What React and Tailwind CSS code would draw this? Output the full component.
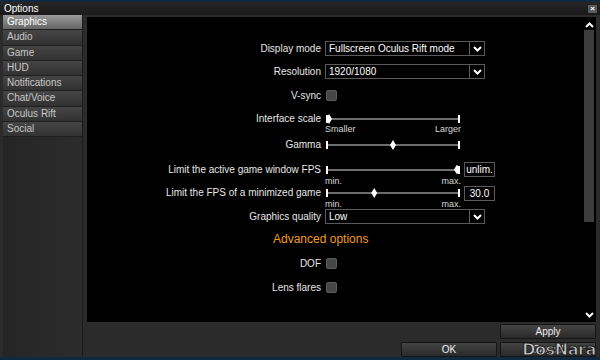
const font = { fontFamily: '"Liberation Sans Narrow", "Liberation Sans", Arial, sans-serif' };

const tabs = ["Graphics", "Audio", "Game", "HUD", "Notifications", "Chat/Voice", "Oculus Rift", "Social"];

const Chevron = ({ up }) => (
  <svg width="9" height="6" viewBox="0 0 9 6">
    <path
      d={up ? "M1 5 L4.5 1.5 L8 5" : "M1 1 L4.5 4.5 L8 1"}
      fill="none"
      stroke="#fff"
      strokeWidth="2"
    />
  </svg>
);

const Select = ({ value }) => (
  <div className="flex h-[15px] w-[160px] border border-[#5a5a5a] bg-black">
    <div className="flex-1 pl-[3px] text-[10px] leading-[13px] text-white">{value}</div>
    <div className="flex w-[15px] items-center justify-center border-l border-[#5a5a5a]">
      <Chevron />
    </div>
  </div>
);

const Check = () => (
  <div className="h-[11px] w-[11px] rounded-[2px] border border-[#5c5c5c] bg-[#464646]" />
);

const Slider = ({ pos }) => (
  <div className="relative h-[10px] w-[134px]">
    <div className="absolute left-0 right-0 top-[4px] h-[2px] bg-[#6e6e6e]" />
    <div className="absolute left-0 top-[1px] h-[8px] w-[2px] bg-white" />
    <div className="absolute right-0 top-[1px] h-[8px] w-[2px] bg-white" />
    <div
      className="absolute top-0 h-[10px] w-[6px] -translate-x-1/2 bg-white [clip-path:polygon(50%_0,100%_50%,50%_100%,0_50%)]"
      style={{ left: `${pos * 100}%`, marginLeft: pos === 0 ? 3 : pos === 1 ? -3 : 0 }}
    />
  </div>
);

const Row = ({ label, children, className = "" }) => (
  <div className={`flex items-center ${className}`}>
    <div className="w-[238px] pr-[4px] text-right text-[10px] leading-none text-[#e6e6e6]">{label}</div>
    {children}
  </div>
);

const SubLabels = ({ left, right, className = "" }) => (
  <div className={`flex ${className}`}>
    <div className="w-[238px]" />
    <div className="flex w-[136px] justify-between text-[9px] leading-none text-[#d8d8d8]">
      <span>{left}</span>
      <span>{right}</span>
    </div>
  </div>
);

const ValueBox = ({ children }) => (
  <div className="ml-[4px] flex h-[15px] w-[31px] items-center justify-center border border-[#5a5a5a] text-[10px] text-white">
    {children}
  </div>
);

const Button = ({ children }) => (
  <div className="flex h-[15px] w-[96px] items-center justify-center rounded-[1px] border border-[#151515] bg-gradient-to-b from-[#444] to-[#2a2a2a] text-[10px] text-[#eee]">
    {children}
  </div>
);

export default function App() {
  return (
    <div className="relative flex h-[360px] w-[600px] flex-col overflow-hidden bg-[#0f2a40] pt-[2px]" style={font}>
      <div className="flex h-[355px] flex-col bg-[#2b2b2b]">
        {/* title bar */}
        <div className="flex h-[13px] items-center justify-between bg-gradient-to-b from-[#262626] to-[#1a1a1a] pl-[4px] pr-[3px]">
          <span className="text-[10px] leading-none text-white">Options</span>
          <div className="flex h-[8px] w-[9px] items-center justify-center bg-[#5a5a5a] text-[8px] font-bold leading-none text-white">
            ×
          </div>
        </div>

        <div className="flex flex-1">
          {/* sidebar */}
          <div className="ml-[3px] flex w-[80px] flex-col border-r border-[#1a1a1a] bg-gradient-to-r from-[#252525] to-[#2c2c2c]">
            {tabs.map((t, i) => (
              <div
                key={t}
                className={`flex h-[15.25px] items-center border-b border-[#1f1f1f] pl-[4px] text-[10px] leading-none ${
                  i === 0
                    ? "bg-gradient-to-b from-[#9a9a9a] to-[#656565] text-white"
                    : "bg-gradient-to-b from-[#454545] to-[#323232] text-[#c8c8c8]"
                }`}
              >
                {t}
              </div>
            ))}
          </div>

          {/* main */}
          <div className="ml-[4px] mr-[4px] flex flex-1 flex-col pt-[2px]">
            <div className="flex h-[305px] bg-black">
              <div className="flex flex-1 flex-col pt-[24px]">
                <Row label="Display mode">
                  <Select value="Fullscreen Oculus Rift mode" />
                </Row>
                <Row label="Resolution" className="mt-[8px]">
                  <Select value="1920/1080" />
                </Row>
                <Row label="V-sync" className="mt-[11px]">
                  <div className="pl-[1px]">
                    <Check />
                  </div>
                </Row>
                <Row label="Interface scale" className="mt-[13px] h-[10px]">
                  <div className="pl-[1px]">
                    <Slider pos={0} />
                  </div>
                </Row>
                <SubLabels left="Smaller" right="Larger" className="mt-[1px] h-[10px]" />
                <Row label="Gamma" className="mt-[5px] h-[10px]">
                  <div className="pl-[1px]">
                    <Slider pos={0.5} />
                  </div>
                </Row>
                <Row label="Limit the active game window FPS" className="mt-[12px] h-[15px]">
                  <div className="pl-[1px]">
                    <Slider pos={1} />
                  </div>
                  <ValueBox>unlim.</ValueBox>
                </Row>
                <SubLabels left="min." right="max." className="h-[9px]" />
                <Row label="Limit the FPS of a minimized game" className="h-[14px]">
                  <div className="pl-[1px]">
                    <Slider pos={0.36} />
                  </div>
                  <ValueBox>30.0</ValueBox>
                </Row>
                <SubLabels left="min." right="max." className="h-[9px]" />
                <Row label="Graphics quality">
                  <Select value="Low" />
                </Row>
                <div className="mt-[7px] flex h-[16px] items-center pl-[186px] text-[12px] leading-none text-[#f29a1a]">
                  Advanced options
                </div>
                <Row label="DOF" className="mt-[11px]">
                  <div className="pl-[1px]">
                    <Check />
                  </div>
                </Row>
                <Row label="Lens flares" className="mt-[13px]">
                  <div className="pl-[1px]">
                    <Check />
                  </div>
                </Row>
              </div>

              {/* scrollbar */}
              <div className="mr-[1px] flex w-[12px] flex-col items-center pt-[5px] pb-[4px]">
                <Chevron up />
                <div className="mt-[2px] h-[192px] w-[10px] bg-[#3d3d3d]" />
                <div className="flex-1" />
                <Chevron />
              </div>
            </div>

            <div className="mt-[2px] flex justify-end">
              <Button>Apply</Button>
            </div>
            <div className="mt-[3px] flex justify-end gap-[3px]">
              <Button>OK</Button>
              <Button>Cancel</Button>
            </div>
          </div>
        </div>
      </div>

      {/* watermark */}
      <div
        className="absolute bottom-[2px] right-[4px] text-[16px] font-bold leading-none tracking-tight text-[#c8c8c8] [-webkit-text-stroke:1px_#1a1a1a]"
        style={{ fontFamily: '"DejaVu Sans", sans-serif' }}
      >
        DosNara
      </div>
    </div>
  );
}
